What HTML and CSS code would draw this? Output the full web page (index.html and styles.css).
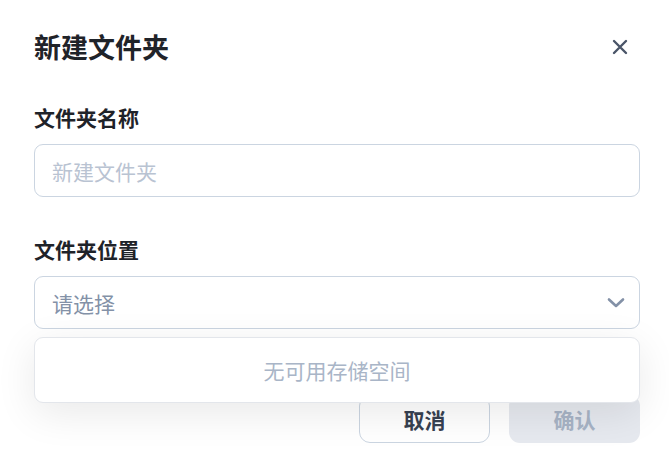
FILE: index.html
```html
<!DOCTYPE html>
<html lang="zh">

<head>
    <meta charset="utf-8">
    <meta name="viewport" content="width=device-width, initial-scale=1.0">
    <title>新建文件夹</title>
    <link rel="stylesheet" href="styles.css">
</head>

<body>
    <!--dialog til ny mappe-->
    <section class="dialog">
        <header class="dialog-head">
            <h1 class="dialog-title">新建文件夹</h1>
            <button class="close" aria-label="关闭">
                <svg width="16" height="16" viewBox="0 0 16 16">
                    <path d="M2 2L14 14M14 2L2 14" stroke="#4a5568" stroke-width="2.4" stroke-linecap="round" fill="none" />
                </svg>
            </button>
        </header>

        <div class="field">
            <label class="field-label">文件夹名称</label>
            <input class="text-input" type="text" placeholder="新建文件夹">
        </div>

        <div class="field">
            <label class="field-label">文件夹位置</label>
            <div class="select">
                <span class="select-value">请选择</span>
                <svg width="18" height="12" viewBox="0 0 18 12">
                    <path d="M2 2.5L9 9L16 2.5" stroke="#8391a7" stroke-width="2.6" stroke-linecap="round" stroke-linejoin="round" fill="none" />
                </svg>
                <!--dropdown med tom liste-->
                <div class="dropdown">
                    <p class="empty">无可用存储空间</p>
                </div>
            </div>
        </div>

        <footer class="dialog-foot">
            <button class="btn btn-cancel">取消</button>
            <button class="btn btn-ok" disabled>确认</button>
        </footer>
    </section>
</body>

</html>
```

FILE: styles.css
```css
body,
html {
    margin: 0;
    height: 100%;
    background-color: #ffffff;
    font-family: "Noto Sans CJK SC", "Noto Sans", sans-serif;
}

.dialog {
    padding: 24px 29px 0 34px;
    box-sizing: border-box;
}

.dialog-head {
    display: flex;
    justify-content: space-between;
    align-items: center;
    height: 46px;
}

.dialog-title {
    margin: 0;
    font-size: 27px;
    font-weight: 700;
    color: #1f2329;
    line-height: 46px;
}

.close {
    display: flex;
    align-items: center;
    justify-content: center;
    width: 32px;
    height: 32px;
    margin-right: 4px;
    padding: 0;
    border: none;
    background: none;
}

/*felter*/

.field {
    display: flex;
    flex-direction: column;
    gap: 13px;
    margin-top: 33px;
}

.field + .field {
    margin-top: 38px;
}

.field-label {
    font-size: 21px;
    font-weight: 700;
    line-height: 28px;
    color: #1f2329;
}

.text-input,
.select {
    box-sizing: border-box;
    height: 53px;
    width: 100%;
    border: 1px solid #cbd5e1;
    border-radius: 9px;
    padding: 0 17px;
    font-family: inherit;
    font-size: 21px;
    background-color: #ffffff;
}

.text-input::placeholder {
    color: #b9c3d2;
}

.select {
    position: relative;
    display: flex;
    align-items: center;
    justify-content: space-between;
    padding-right: 14px;
}

.select-value {
    color: #8391a7;
}

/*dropdown ligger over knapperne*/

.dropdown {
    position: absolute;
    left: -1px;
    right: -1px;
    top: 60px;
    height: 66px;
    box-sizing: border-box;
    border: 1px solid #e3e6eb;
    border-radius: 9px;
    background-color: #ffffff;
    box-shadow: 0 10px 40px rgba(0, 0, 0, .09);
    display: flex;
    align-items: center;
    justify-content: center;
    z-index: 2;
}

.empty {
    margin: 0;
    font-size: 21px;
    color: #a9b5c7;
}

/*knapper*/

.dialog-foot {
    display: flex;
    justify-content: flex-end;
    gap: 19px;
    margin-top: 66px;
}

.btn {
    width: 131px;
    height: 48px;
    border-radius: 11px;
    font-family: inherit;
    font-size: 21px;
    font-weight: 700;
}

.btn-cancel {
    border: 1px solid #cbd5e1;
    background-color: #ffffff;
    color: #374151;
}

.btn-ok {
    border: none;
    background-color: #e6e9ef;
    color: #a7b3c5;
}
```
